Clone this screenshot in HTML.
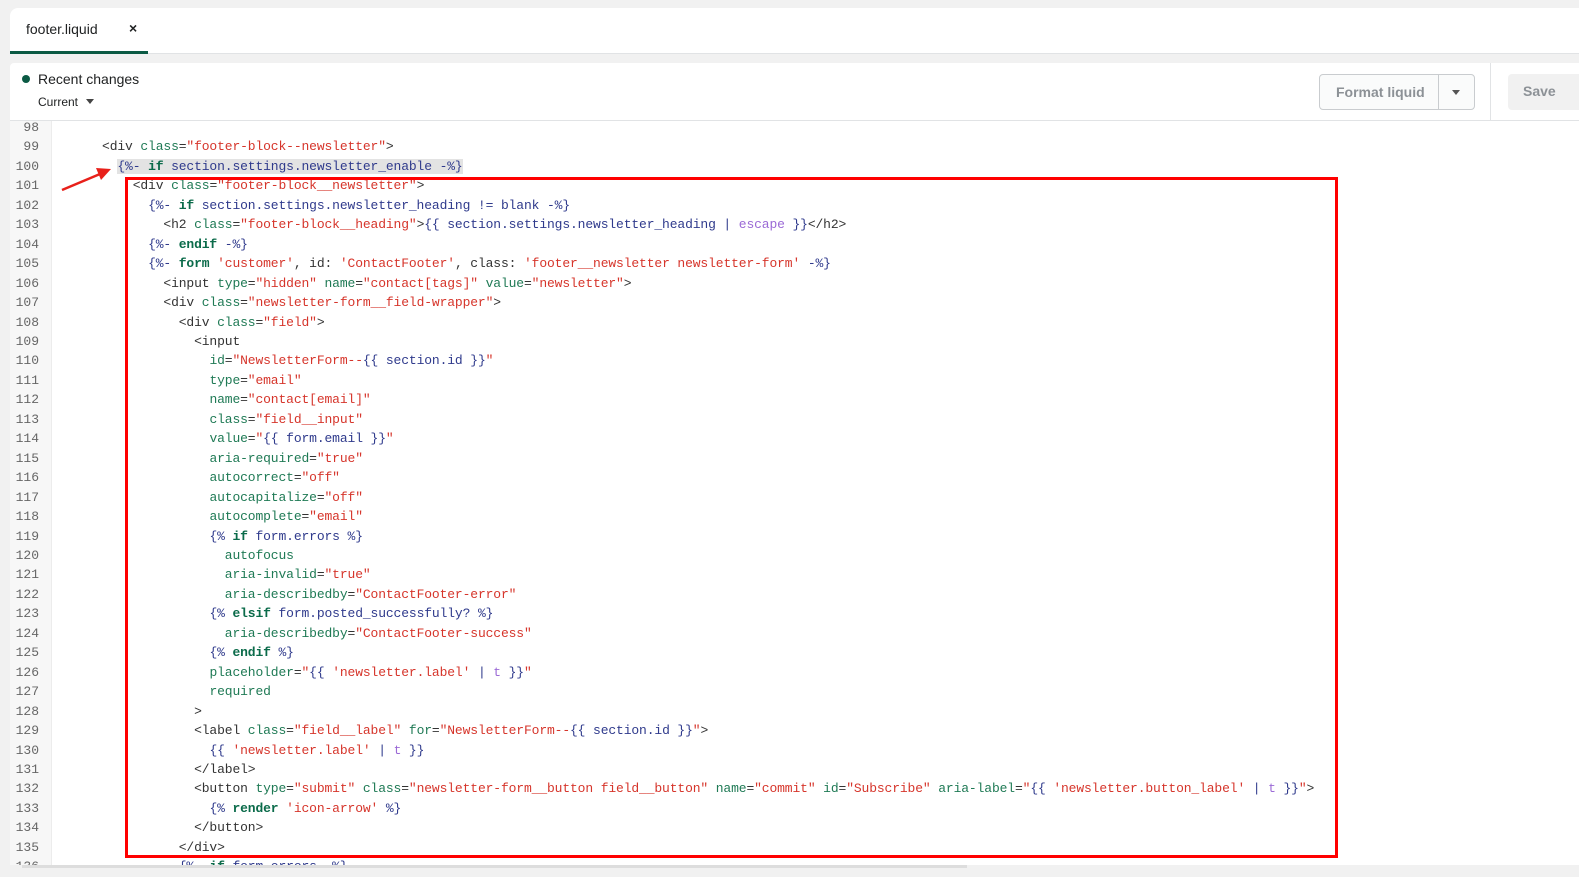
<!DOCTYPE html>
<html><head><meta charset="utf-8"><style>
*{margin:0;padding:0;box-sizing:border-box}
body{width:1579px;height:873px;background:#f1f1f1;font-family:"Liberation Sans",sans-serif;position:relative;overflow:hidden}
.tabbar{position:absolute;left:10px;top:8px;width:1580px;height:46px;background:#fff;border-top-left-radius:8px;border-bottom:1px solid #e1e3e5}
.tab{position:absolute;left:0;top:0;width:138px;height:46px;border-bottom:3px solid #0b5a44}
.tab span{position:absolute;left:16px;top:13px;font-size:14px;color:#202223}
.tab b{position:absolute;left:119px;top:12px;font-size:14px;color:#202223}
.hdr{position:absolute;left:10px;top:63px;width:1580px;height:58px;background:#fff;border-top-left-radius:4px;border-bottom:1px solid #e1e3e5}
.dot{position:absolute;left:12px;top:12px;width:8px;height:8px;border-radius:50%;background:#0b5a44}
.rc{position:absolute;left:28px;top:8px;font-size:14px;color:#202223}
.cur{position:absolute;left:28px;top:32px;font-size:12px;color:#202223}
.cur i{display:inline-block;border-left:4px solid transparent;border-right:4px solid transparent;border-top:5px solid #444;margin-left:8px;vertical-align:2px}
.fmt{position:absolute;left:1319px;top:74px;width:156px;height:36px;border:1px solid #c9cccf;border-radius:4px;background:#fafbfb}
.fmt span{position:absolute;left:16px;top:9px;font-size:14px;color:#8c9196;font-weight:bold}
.fmt .sep{position:absolute;left:118px;top:0;width:1px;height:34px;background:#c9cccf}
.fmt i{position:absolute;left:132px;top:15px;border-left:4px solid transparent;border-right:4px solid transparent;border-top:5px solid #555}
.vsep{position:absolute;left:1490px;top:63px;width:1px;height:57px;background:#e1e3e5}
.save{position:absolute;left:1508px;top:74px;width:80px;height:36px;border-radius:4px;background:#f1f1f1}
.save span{position:absolute;left:15px;top:9px;font-size:14px;color:#8c9196;font-weight:bold}
.ed{position:absolute;left:10px;top:121px;width:1580px;height:744px;background:#fff}
.gut{position:absolute;left:10px;top:121px;width:42px;height:744px;background:#f7f7f7;border-right:1px solid #ececec}
.nums,.code{position:absolute;top:118px;font-family:"Liberation Mono",monospace;font-size:13px;line-height:19.45px;white-space:pre}
.nums{left:10px;width:29px;text-align:right;color:#666}
.code{left:56px;color:#333;letter-spacing:-0.13px}
.a{color:#1f7a55}.s{color:#d6352b}.k{color:#0b6b4a;font-weight:bold}.v{color:#2f3a8c}.f{color:#9b6ad6}
.hl{background:#e3e3e3}
.box{position:absolute;left:125px;top:177px;width:1213px;height:681px;border:3px solid #ff0000}
.bot{position:absolute;left:0;top:865px;width:1579px;height:8px;background:#f1f1f1}
.sb{position:absolute;left:22px;top:865px;width:945px;height:3px;background:#ddd}
</style></head><body>
<div class="tabbar"><div class="tab"><span>footer.liquid</span><b>×</b></div></div>
<div class="hdr"><div class="dot"></div><div class="rc">Recent changes</div><div class="cur">Current<i></i></div></div>
<div class="fmt"><span>Format liquid</span><div class="sep"></div><i></i></div>
<div class="vsep"></div>
<div class="save"><span>Save</span></div>
<div class="ed"></div><div class="gut"></div>
<div class="nums">98
99
100
101
102
103
104
105
106
107
108
109
110
111
112
113
114
115
116
117
118
119
120
121
122
123
124
125
126
127
128
129
130
131
132
133
134
135
136</div>
<div class="code">
      &lt;div <span class="a">class</span>=<span class="s">"footer-block--newsletter"</span>&gt;
        <span class="hl"><span class="v">{%-</span> <span class="k">if</span> <span class="v">section.settings.newsletter_enable -%}</span></span>
          &lt;div <span class="a">class</span>=<span class="s">"footer-block__newsletter"</span>&gt;
            <span class="v">{%-</span> <span class="k">if</span> <span class="v">section.settings.newsletter_heading != blank -%}</span>
              &lt;h2 <span class="a">class</span>=<span class="s">"footer-block__heading"</span>&gt;<span class="v">{{ section.settings.newsletter_heading | </span><span class="f">escape</span><span class="v"> }}</span>&lt;/h2&gt;
            <span class="v">{%-</span> <span class="k">endif</span> <span class="v">-%}</span>
            <span class="v">{%-</span> <span class="k">form</span> <span class="s">'customer'</span>, id: <span class="s">'ContactFooter'</span>, class: <span class="s">'footer__newsletter newsletter-form'</span> <span class="v">-%}</span>
              &lt;input <span class="a">type</span>=<span class="s">"hidden"</span> <span class="a">name</span>=<span class="s">"contact[tags]"</span> <span class="a">value</span>=<span class="s">"newsletter"</span>&gt;
              &lt;div <span class="a">class</span>=<span class="s">"newsletter-form__field-wrapper"</span>&gt;
                &lt;div <span class="a">class</span>=<span class="s">"field"</span>&gt;
                  &lt;input
                    <span class="a">id</span>=<span class="s">"NewsletterForm--</span><span class="v">{{ section.id }}</span><span class="s">"</span>
                    <span class="a">type</span>=<span class="s">"email"</span>
                    <span class="a">name</span>=<span class="s">"contact[email]"</span>
                    <span class="a">class</span>=<span class="s">"field__input"</span>
                    <span class="a">value</span>=<span class="s">"</span><span class="v">{{ form.email }}</span><span class="s">"</span>
                    <span class="a">aria-required</span>=<span class="s">"true"</span>
                    <span class="a">autocorrect</span>=<span class="s">"off"</span>
                    <span class="a">autocapitalize</span>=<span class="s">"off"</span>
                    <span class="a">autocomplete</span>=<span class="s">"email"</span>
                    <span class="v">{%</span> <span class="k">if</span> <span class="v">form.errors %}</span>
                      <span class="a">autofocus</span>
                      <span class="a">aria-invalid</span>=<span class="s">"true"</span>
                      <span class="a">aria-describedby</span>=<span class="s">"ContactFooter-error"</span>
                    <span class="v">{%</span> <span class="k">elsif</span> <span class="v">form.posted_successfully? %}</span>
                      <span class="a">aria-describedby</span>=<span class="s">"ContactFooter-success"</span>
                    <span class="v">{%</span> <span class="k">endif</span> <span class="v">%}</span>
                    <span class="a">placeholder</span>=<span class="s">"</span><span class="v">{{ </span><span class="s">'newsletter.label'</span><span class="v"> | </span><span class="f">t</span><span class="v"> }}</span><span class="s">"</span>
                    <span class="a">required</span>
                  &gt;
                  &lt;label <span class="a">class</span>=<span class="s">"field__label"</span> <span class="a">for</span>=<span class="s">"NewsletterForm--</span><span class="v">{{ section.id }}</span><span class="s">"</span>&gt;
                    <span class="v">{{ </span><span class="s">'newsletter.label'</span><span class="v"> | </span><span class="f">t</span><span class="v"> }}</span>
                  &lt;/label&gt;
                  &lt;button <span class="a">type</span>=<span class="s">"submit"</span> <span class="a">class</span>=<span class="s">"newsletter-form__button field__button"</span> <span class="a">name</span>=<span class="s">"commit"</span> <span class="a">id</span>=<span class="s">"Subscribe"</span> <span class="a">aria-label</span>=<span class="s">"</span><span class="v">{{ </span><span class="s">'newsletter.button_label'</span><span class="v"> | </span><span class="f">t</span><span class="v"> }}</span><span class="s">"</span>&gt;
                    <span class="v">{%</span> <span class="k">render</span> <span class="s">'icon-arrow'</span> <span class="v">%}</span>
                  &lt;/button&gt;
                &lt;/div&gt;
                <span class="v">{%-</span> <span class="k">if</span> <span class="v">form.errors -%}</span></div>
<div class="box"></div>
<svg style="position:absolute;left:0;top:0" width="200" height="220"><line x1="62" y1="190" x2="100" y2="174" stroke="#e8201a" stroke-width="2.5"/><polygon points="111,169 96,168 101,180" fill="#e8201a"/></svg>
<div class="bot"></div><div class="sb"></div>
</body></html>
